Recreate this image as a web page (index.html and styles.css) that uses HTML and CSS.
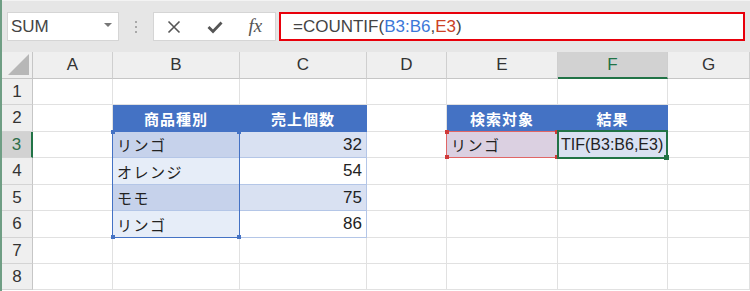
FILE: index.html
```html
<!DOCTYPE html>
<html lang="ja">
<head>
    <meta charset="UTF-8">
    <title>COUNTIF</title>
    <link rel="stylesheet" href="styles.css">
</head>
<body>
    <div class="app">
        <div class="toolbar">
            <div class="namebox">
                <span>SUM</span>
                <span class="caret"></span>
            </div>
            <div class="grip"><i></i><i></i><i></i></div>
            <div class="fnbox">
                <svg width="14" height="14" viewBox="0 0 14 14"><path d="M1.5 1.5 L12.5 12.5 M12.5 1.5 L1.5 12.5" stroke="#555" stroke-width="1.6" fill="none"/></svg>
                <svg width="16" height="14" viewBox="0 0 16 14"><path d="M1.5 7 L6 11.5 L14.5 2.5" stroke="#555" stroke-width="2.8" fill="none"/></svg>
                <span class="fx">fx</span>
            </div>
            <div class="formula">=COUNTIF(<span class="ref-b">B3:B6</span>,<span class="ref-e">E3</span>)</div>
        </div>

        <div class="sheet">
            <!-- column headers -->
            <div class="c corner"><span class="tri"></span></div>
            <div class="c ch">A</div>
            <div class="c ch">B</div>
            <div class="c ch">C</div>
            <div class="c ch">D</div>
            <div class="c ch">E</div>
            <div class="c ch on">F</div>
            <div class="c ch">G</div>

            <!-- row 1 -->
            <div class="c rh">1</div>
            <div class="c"></div><div class="c"></div><div class="c"></div><div class="c"></div>
            <div class="c"></div><div class="c"></div><div class="c"></div>

            <!-- row 2 -->
            <div class="c rh">2</div>
            <div class="c"></div>
            <div class="c th">商品種別</div>
            <div class="c th">売上個数</div>
            <div class="c"></div>
            <div class="c th">検索対象</div>
            <div class="c th">結果</div>
            <div class="c"></div>

            <!-- row 3 -->
            <div class="c rh on">3</div>
            <div class="c"></div>
            <div class="c jp sel-dark">リンゴ</div>
            <div class="c num band">32</div>
            <div class="c"></div>
            <div class="c jp ref-cell">リンゴ</div>
            <div class="c band edit">TIF(B3:B6,E3)</div>
            <div class="c"></div>

            <!-- row 4 -->
            <div class="c rh">4</div>
            <div class="c"></div>
            <div class="c jp sel-light">オレンジ</div>
            <div class="c num plain">54</div>
            <div class="c"></div><div class="c"></div><div class="c"></div><div class="c"></div>

            <!-- row 5 -->
            <div class="c rh">5</div>
            <div class="c"></div>
            <div class="c jp sel-dark">モモ</div>
            <div class="c num band">75</div>
            <div class="c"></div><div class="c"></div><div class="c"></div><div class="c"></div>

            <!-- row 6 -->
            <div class="c rh">6</div>
            <div class="c"></div>
            <div class="c jp sel-light">リンゴ</div>
            <div class="c num plain">86</div>
            <div class="c"></div><div class="c"></div><div class="c"></div><div class="c"></div>

            <!-- row 7 -->
            <div class="c rh">7</div>
            <div class="c"></div><div class="c"></div><div class="c"></div><div class="c"></div>
            <div class="c"></div><div class="c"></div><div class="c"></div>

            <!-- row 8 -->
            <div class="c rh">8</div>
            <div class="c"></div><div class="c"></div><div class="c"></div><div class="c"></div>
            <div class="c"></div><div class="c"></div><div class="c"></div>

            <!-- range outlines drawn over the cells -->
            <div class="outline range-b">
                <i class="h tl"></i><i class="h tr"></i><i class="h bl"></i><i class="h br"></i>
            </div>
            <div class="outline range-e">
                <i class="h tl"></i><i class="h tr"></i><i class="h bl"></i><i class="h br"></i>
            </div>
            <div class="outline active">
                <i class="h br"></i>
            </div>
        </div>
    </div>
</body>
</html>
```

FILE: styles.css
```css
* {
    box-sizing: border-box;
}
body {
    margin: 0;
    background: #fff;
    font-family: "Liberation Sans", Arial, sans-serif;
    overflow: hidden;
}
.app {
    width: 750px;
    height: 291px;
    border-left: 2px solid #6f9e84;
}
.toolbar {
    height: 52px;
    background: #e6e6e6;
    border-top: 1px solid #f3f3f3;
    display: flex;
    align-items: flex-start;
    padding: 11px 5px 0 5px;
}
.namebox {
    width: 112px;
    height: 29px;
    background: #fff;
    border: 1px solid #d5d5d5;
    display: flex;
    align-items: center;
    justify-content: space-between;
    padding: 0 6px 0 3px;
    font-size: 17px;
    color: #444;
}
.caret {
    width: 0;
    height: 0;
    border-left: 4px solid transparent;
    border-right: 4px solid transparent;
    border-top: 4px solid #777;
    margin-top: -4px;
}
.grip {
    width: 34px;
    height: 29px;
    display: flex;
    flex-direction: column;
    align-items: center;
    justify-content: center;
    gap: 3px;
}
.grip i {
    width: 2px;
    height: 2px;
    background: #a8a8a8;
}
.fnbox {
    width: 123px;
    height: 29px;
    background: #fff;
    border: 1px solid #d5d5d5;
    display: flex;
    align-items: center;
    justify-content: space-around;
}
.fx {
    font-family: "Liberation Serif", "Times New Roman", serif;
    font-style: italic;
    font-size: 19px;
    color: #555;
    margin-top: -2px;
}
.formula {
    flex: 1;
    margin-left: 3px;
    height: 29px;
    background: #fff;
    border: 2px solid #e8000b;
    padding-left: 12px;
    font-size: 17px;
    line-height: 25px;
    color: #444;
    white-space: nowrap;
}
.ref-b {
    color: #3c78d8;
}
.ref-e {
    color: #cc4125;
}

.sheet {
    position: relative;
    display: grid;
    grid-template-columns: 31px 80px 127px 127px 80px 111px 110px 82px;
    grid-template-rows: 27px 26px 27px 26px 27px 26px 27px 26px 26px;
}
.c {
    display: flex;
    align-items: center;
    padding: 0 4px;
    border-right: 1px solid #e1e1e1;
    border-bottom: 1px solid #e1e1e1;
    font-size: 17px;
    color: #222;
    white-space: nowrap;
    overflow: hidden;
}
.corner {
    background: #efefef;
    border-right: 1px solid #c6c6c6;
    border-bottom: 1px solid #c6c6c6;
    justify-content: flex-end;
    align-items: flex-end;
    padding: 0 3px 3px 0;
}
.tri {
    width: 0;
    height: 0;
    border-left: 21px solid transparent;
    border-bottom: 21px solid #b7b7b7;
}
.ch {
    background: #efefef;
    border-right: 1px solid #cfcfcf;
    border-bottom: 1px solid #c6c6c6;
    justify-content: center;
    color: #333;
}
.ch.on {
    background: #d2d2d2;
    color: #217346;
    border-bottom: 2px solid #217346;
}
.rh {
    background: #efefef;
    border-right: 1px solid #c6c6c6;
    border-bottom: 1px solid #d4d4d4;
    justify-content: center;
    color: #333;
}
.rh.on {
    background: #d2d2d2;
    color: #2e6e4a;
    border-right: 2px solid #217346;
}
.jp, .th {
    font-family: "Noto Sans CJK JP", sans-serif;
    font-size: 15px;
    letter-spacing: 1.5px;
}
.th {
    background: #4472c4;
    color: #fff;
    font-weight: bold;
    justify-content: center;
    letter-spacing: 1px;
    border-right-color: #4472c4;
    border-bottom-color: #4472c4;
}
.num {
    justify-content: flex-end;
}
.band {
    background: #d9e1f2;
    border-right-color: #b4c6e7;
    border-bottom-color: #b4c6e7;
}
.plain {
    background: #fff;
    border-right-color: #b4c6e7;
    border-bottom-color: #b4c6e7;
}
.sel-dark {
    background: #c6d2eb;
    border-bottom-color: #b4c6e7;
}
.sel-light {
    background: #e6edf8;
    border-bottom-color: #b4c6e7;
}
.ref-cell {
    background: #dbd0e1;
}
.edit {
    padding-left: 3px;
    font-size: 16px;
}

/* range outlines over the grid */
.outline {
    position: absolute;
    top: -1px;
    left: -1px;
    right: 0;
    bottom: 0;
    border: 1px solid #4472c4;
}
.range-b {
    grid-column: 3 / 4;
    grid-row: 4 / 8;
}
.range-e {
    grid-column: 6 / 7;
    grid-row: 4 / 5;
    border-color: #e06666;
}
.active {
    grid-column: 7 / 8;
    grid-row: 4 / 5;
    top: -2px;
    bottom: -1px;
    border: 2px solid #217346;
}
.h {
    position: absolute;
    width: 4px;
    height: 4px;
    background: #4472c4;
}
.range-e .h {
    background: #d03a3a;
}
.active .h {
    background: #217346;
    width: 5px;
    height: 5px;
    right: -3px;
    bottom: -3px;
}
.tl { top: -2px; left: -2px; }
.tr { top: -2px; right: -2px; }
.bl { bottom: -2px; left: -2px; }
.br { bottom: -2px; right: -2px; }
```
